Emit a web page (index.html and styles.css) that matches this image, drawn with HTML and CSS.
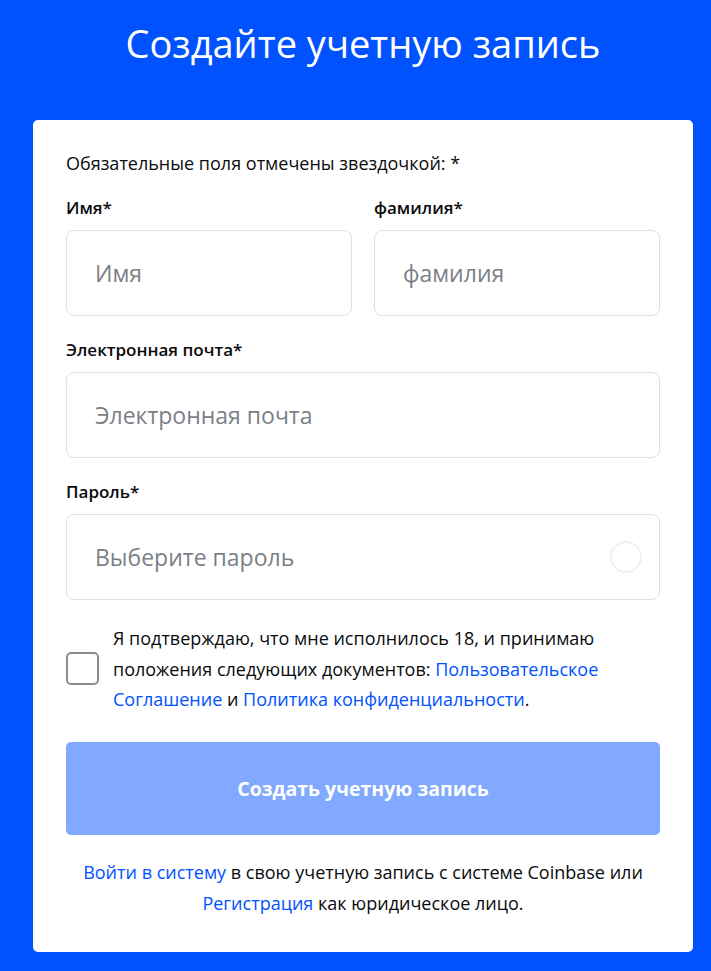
FILE: index.html
```html
<!DOCTYPE html>
<html lang="ru">
<head>
<meta charset="utf-8">
<title>Создайте учетную запись</title>
<link rel="stylesheet" href="styles.css">
</head>
<body>
<header class="hero">
  <h1 class="hero-title">Создайте учетную запись</h1>
</header>
<main class="card">
  <p class="note">Обязательные поля отмечены звездочкой: *</p>
  <div class="name-row">
    <div class="field">
      <label class="label" for="first">Имя*</label>
      <input class="input" id="first" type="text" placeholder="Имя">
    </div>
    <div class="field">
      <label class="label" for="last">фамилия*</label>
      <input class="input" id="last" type="text" placeholder="фамилия">
    </div>
  </div>
  <div class="field">
    <label class="label" for="email">Электронная почта*</label>
    <input class="input" id="email" type="email" placeholder="Электронная почта">
  </div>
  <div class="field">
    <label class="label" for="pass">Пароль*</label>
    <div class="input-wrap">
      <input class="input" id="pass" type="password" placeholder="Выберите пароль">
      <span class="strength"></span>
    </div>
  </div>
  <div class="agree">
    <span class="checkbox"></span>
    <p class="agree-text">Я подтверждаю, что мне исполнилось 18, и принимаю положения следующих документов: <a href="#" class="link">Пользовательское Соглашение</a> и <a href="#" class="link">Политика конфиденциальности</a>.</p>
  </div>
  <button class="submit" type="button">Создать учетную запись</button>
  <p class="footer"><a href="#" class="link">Войти в систему</a> в свою учетную запись с системе Coinbase или <a href="#" class="link">Регистрация</a> как юридическое лицо.</p>
</main>
</body>
</html>
```

FILE: styles.css
```css
* { box-sizing: border-box; }
html, body { margin: 0; padding: 0; }
body {
  background: #0052ff;
  font-family: "Open Sans", "Noto Sans", sans-serif;
  color: #0a0b0d;
  height: 971px;
  overflow: hidden;
}
.hero {
  height: 120px;
  padding-top: 14px;
  padding-left: 15px;
  text-align: center;
}
.hero-title {
  margin: 0;
  color: #ffffff;
  font-weight: 400;
  font-size: 38px;
  line-height: 58px;
}
.card {
  margin-left: 33px;
  width: 660px;
  background: #ffffff;
  border-radius: 5px;
  padding: 31px 33px 33px;
  display: flex;
  flex-direction: column;
}
.note {
  margin: 0 0 21px;
  font-size: 18px;
  line-height: 24px;
}
.name-row {
  display: grid;
  grid-template-columns: 1fr 1fr;
  gap: 22px;
}
.field {
  display: flex;
  flex-direction: column;
  margin-bottom: 22px;
}
.label {
  font-size: 17px;
  font-weight: 600;
  line-height: 24px;
  margin-bottom: 10px;
}
.input {
  width: 100%;
  height: 86px;
  border: 1px solid #dee0e6;
  border-radius: 8px;
  padding: 0 28px;
  font-family: inherit;
  font-size: 23px;
  color: #0a0b0d;
  background: #ffffff;
  outline: none;
}
.input::placeholder { color: #7c7f86; }
.input-wrap {
  position: relative;
}
.strength {
  position: absolute;
  right: 18px;
  top: 27px;
  width: 32px;
  height: 32px;
  border: 2px solid #f1eef6;
  border-radius: 50%;
}
.agree {
  display: flex;
  align-items: center;
  gap: 14px;
  margin-top: 1px;
}
.checkbox {
  flex: 0 0 33px;
  width: 33px;
  height: 33px;
  border: 2px solid #8a8d93;
  border-radius: 5px;
}
.agree-text {
  margin: 0;
  font-size: 18px;
  line-height: 30.5px;
}
.link {
  color: #0052ff;
  text-decoration: none;
}
.submit {
  margin-top: 27px;
  height: 93px;
  border: none;
  border-radius: 5px;
  background: #80a9ff;
  color: #ffffff;
  font-family: inherit;
  font-size: 19.5px;
  font-weight: 700;
}
.footer {
  margin: 22px 0 0;
  text-align: center;
  font-size: 18px;
  line-height: 31px;
}
```
